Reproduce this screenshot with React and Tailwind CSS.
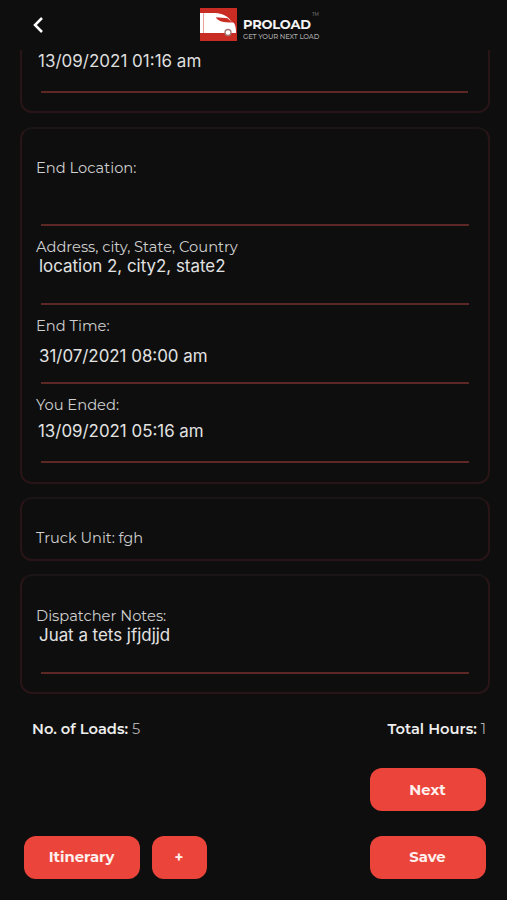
const Logo = () => (
    <div className="flex h-[34px] w-[126px] gap-1.5">
        <svg viewBox="0 0 37 33" className="h-[33px] w-[37px] shrink-0">
            <rect width="37" height="33" fill="#c82c23" />
            <path d="M0 5H13C20 5 25 6.5 29 10.5L31.5 14L34 15Q36 18 36 25H0Z" fill="#fff" />
            <path d="M16 9.2L27.5 10.3L32 14.6C24 14.2 17.5 13.5 16 9.2Z" fill="#c82c23" />
            <path d="M3.5 5V25" stroke="#d8655d" strokeWidth=".6" />
            <circle cx="28" cy="24.5" r="3" fill="#fff" stroke="#a47570" strokeWidth="1.3" />
        </svg>
        <div>
            <div className="flex h-[23px] items-start">
                <p className="mt-[9px] w-[67px] text-[13px] leading-[14px] font-bold tracking-[-0.2px] text-[#f4f4f4]">PROLOAD</p>
                <span className="mt-[5px] ml-[2px] text-[4.5px] leading-[4px] text-[#999]">TM</span>
            </div>
            <p className="mt-[1px] text-[6.8px] leading-[9px] font-medium tracking-[-0.1px] whitespace-nowrap text-[#aaa]">GET YOUR NEXT LOAD</p>
        </div>
    </div>
);

const Card = ({ className = '', children }) => (
    <section className={`mr-[17px] ml-5 rounded-xl border-2 border-[#291517] border-t-[#1b1516] pl-[14px] ${className}`}>
        {children}
    </section>
);

const Field = ({ label, value, valueClass = '' }) => (
    <div className="flex h-[79px] flex-col">
        <p className="mt-[11px] h-5 text-[14.7px] leading-5 text-[#cfcfcf]">{label}</p>
        <p className={`h-5 font-['Inter',sans-serif] text-[16.9px] leading-5 whitespace-nowrap text-[#e2e2e2] ${valueClass}`}>{value}</p>
        <div className="mt-auto mr-[19px] ml-[5px] h-[2px] bg-[#5c2724]" />
    </div>
);

const Button = ({ className = 'w-[116px]', children }) => (
    <button className={`h-[43px] rounded-xl bg-[#eb453b] pr-px text-[14.8px] font-bold text-[#fff0ed] ${className}`}>
        {children}
    </button>
);

export default function App() {
    return (
        <main className="flex h-[900px] w-[507px] flex-col overflow-hidden bg-[#0e0e0e] font-['Montserrat','Inter',sans-serif]">
            <header className="flex h-[50px] shrink-0 items-start pt-2">
                <svg viewBox="0 0 12 16" className="mt-[9px] ml-8 h-4 w-3" fill="none" stroke="#fff" strokeWidth="2.5">
                    <path d="M10 1L3 8L10 15" />
                </svg>
                <div className="ml-[156px]"><Logo /></div>
            </header>

            <section className="mr-[17px] ml-5 flex h-[63px] shrink-0 flex-col rounded-b-xl border-2 border-t-0 border-[#291517] pl-4">
                <p className="mt-px font-['Inter',sans-serif] text-[17px] leading-5 text-[#dedede]">13/09/2021 01:16 am</p>
                <div className="mt-5 mr-5 ml-[3px] h-[2px] bg-[#5c2724]" />
            </section>

            <Card className="mt-[14px] h-[357px] shrink-0 pt-[18px]">
                <Field label="End Location:" />
                <Field label="Address, city, State, Country" value="location 2, city2, state2" valueClass="-mt-px ml-[3px]" />
                <Field label="End Time:" value="31/07/2021 08:00 am" valueClass="mt-[10px] ml-[3px]" />
                <Field label="You Ended:" value="13/09/2021 05:16 am" valueClass="mt-[6px] ml-[2px]" />
            </Card>

            <Card className="mt-[13px] h-[64px] shrink-0 pt-[29px]">
                <p className="text-[14.6px] leading-5 text-[#cfcfcf]">Truck Unit: fgh</p>
            </Card>

            <Card className="mt-[13px] h-[120px] shrink-0 pt-[19px]">
                <Field label="Dispatcher Notes:" value="Juat a tets jfjdjjd" valueClass="-mt-px ml-[3px]" />
            </Card>

            <div className="mt-[25px] flex h-5 shrink-0 justify-between pr-[21px] pl-8 text-[14.7px] leading-5 text-[#eee]">
                <p><span className="font-semibold">No. of Loads:</span> <span className="text-[#b0b0b0]">5</span></p>
                <p><span className="font-semibold">Total Hours:</span> <span className="text-[#b0b0b0]">1</span></p>
            </div>

            <div className="mt-[29px] flex justify-end pr-[21px]">
                <Button className="w-[116px] pt-px">Next</Button>
            </div>
            <div className="mt-[25px] flex pr-[21px] pl-6">
                <Button>Itinerary</Button>
                <Button className="ml-3 w-[55px]">+</Button>
                <Button className="ml-auto w-[116px]">Save</Button>
            </div>
        </main>
    );
}
